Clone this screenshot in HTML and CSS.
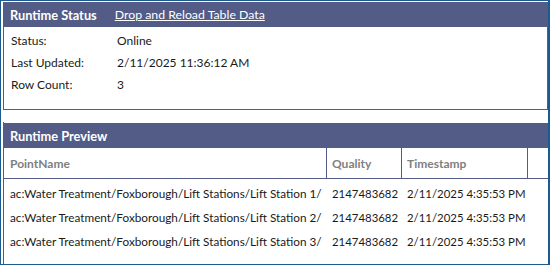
FILE: index.html
```html
<!DOCTYPE html>
<html>
<head>
<meta charset="utf-8">
<link rel="stylesheet" href="styles.css">
</head>
<body>
<div class="frame">
  <section class="panel status">
    <div class="panel-head">
      <span class="title">Runtime Status</span>
      <a class="action" href="#">Drop and Reload Table Data</a>
    </div>
    <div class="panel-body">
      <div class="kv"><span class="k">Status:</span><span class="v">Online</span></div>
      <div class="kv"><span class="k">Last Updated:</span><span class="v">2/11/2025 11:36:12 AM</span></div>
      <div class="kv"><span class="k">Row Count:</span><span class="v">3</span></div>
    </div>
  </section>
  <section class="panel preview">
    <div class="panel-head">
      <span class="title">Runtime Preview</span>
    </div>
    <div class="grid">
      <div class="row head">
        <div class="c c1">PointName</div>
        <div class="c c2">Quality</div>
        <div class="c c3">Timestamp</div>
        <div class="c c4"></div>
      </div>
      <div class="row">
        <div class="c c1">ac:Water Treatment/Foxborough/Lift Stations/Lift Station 1/</div>
        <div class="c c2">2147483682</div>
        <div class="c c3">2/11/2025 4:35:53 PM</div>
        <div class="c c4"></div>
      </div>
      <div class="row">
        <div class="c c1">ac:Water Treatment/Foxborough/Lift Stations/Lift Station 2/</div>
        <div class="c c2">2147483682</div>
        <div class="c c3">2/11/2025 4:35:53 PM</div>
        <div class="c c4"></div>
      </div>
      <div class="row">
        <div class="c c1">ac:Water Treatment/Foxborough/Lift Stations/Lift Station 3/</div>
        <div class="c c2">2147483682</div>
        <div class="c c3">2/11/2025 4:35:53 PM</div>
        <div class="c c4"></div>
      </div>
    </div>
  </section>
</div>
</body>
</html>
```
FILE: styles.css
```css
html, body {
  margin: 0;
  padding: 0;
  background: #ffffff;
}
body {
  font-family: "Lato", "Noto Sans", sans-serif;
  font-size: 12px;
  color: #1a1a1a;
}
.frame {
  box-sizing: border-box;
  width: 550px;
  height: 265px;
  border: 1px solid #1d5a90;
  border-right-width: 2px;
  padding: 1px 0 0 2px;
  display: flex;
  flex-direction: column;
  gap: 12px;
  overflow: hidden;
}
.panel-head {
  height: 25px;
  background: #525c87;
  display: flex;
  align-items: center;
  padding-left: 7px;
  gap: 18px;
  color: #ffffff;
  font-size: 12.8px;
}
.title {
  font-weight: bold;
}
.action {
  color: #ffffff;
  text-decoration: underline;
  font-size: 12.3px;
}
.status .panel-body {
  border: 1px solid #525c87;
  border-top: none;
  height: 83px;
  padding: 2px 0 0 7px;
  box-sizing: border-box;
}
.kv {
  height: 22px;
  display: flex;
  align-items: center;
}
.k {
  width: 106px;
}
.preview {
  flex: 1;
  border-left: 1px solid #525c87;
  display: flex;
  flex-direction: column;
}
.preview .panel-head {
  margin-left: -1px;
  margin-top: 1px;
}
.row {
  display: grid;
  grid-template-columns: 323px 75px 126px 1fr;
  height: 24px;
  align-items: center;
  font-size: 11.4px;
}
.row .c1 {
  font-size: 11.75px;
}
.row.head {
  height: 30px;
  border-bottom: 1px solid #525c87;
  color: #808080;
  font-weight: bold;
  font-size: 12px;
  margin-bottom: 2px;
}
.row.head .c1 {
  font-size: 12px;
}
.c {
  white-space: nowrap;
  overflow: hidden;
  padding-left: 6px;
  height: 100%;
  display: flex;
  align-items: center;
  box-sizing: border-box;
}
.row .c2,
.row .c3 {
  padding-left: 5px;
}
.row.head .c1,
.row.head .c2,
.row.head .c3 {
  border-right: 1px solid #525c87;
}
```
